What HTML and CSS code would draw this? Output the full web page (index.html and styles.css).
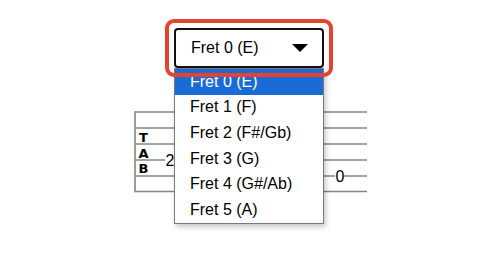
FILE: index.html
```html
<!DOCTYPE html>
<html>
<head>
<meta charset="utf-8">
<link rel="stylesheet" href="styles.css">
</head>
<body>
<div class="stage">
  <div class="picker">
    <div class="select">
      <span class="select-label">Fret 0 (E)</span>
      <svg class="caret" width="16" height="8" viewBox="0 0 16 8"><path d="M0 0H16L8 8Z" fill="#000"/></svg>
    </div>
    <ul class="options">
      <li class="option selected">Fret 0 (E)</li>
      <li class="option">Fret 1 (F)</li>
      <li class="option">Fret 2 (F#/Gb)</li>
      <li class="option">Fret 3 (G)</li>
      <li class="option">Fret 4 (G#/Ab)</li>
      <li class="option">Fret 5 (A)</li>
    </ul>
  </div>
  <svg class="staff" width="240" height="92" viewBox="0 0 240 92">
    <g stroke="#858585" stroke-width="1.6">
      <line x1="5" y1="8" x2="237" y2="8"/>
      <line x1="5" y1="24" x2="237" y2="24"/>
      <line x1="5" y1="40" x2="237" y2="40"/>
      <line x1="5" y1="56" x2="237" y2="56"/>
      <line x1="5" y1="72" x2="237" y2="72"/>
      <line x1="5" y1="87.5" x2="237" y2="87.5"/>
      <line x1="5" y1="7.2" x2="5" y2="88.3"/>
    </g>
    <g class="clef">
      <text x="13.5" y="37.5">T</text>
      <text x="13.5" y="53.5">A</text>
      <text x="13.5" y="69">B</text>
    </g>
    <rect x="35" y="50" width="9" height="12" fill="#fff"/>
    <rect x="205" y="66" width="9" height="12" fill="#fff"/>
    <text class="fret" x="35.5" y="62">2</text>
    <text class="fret" x="205.5" y="77.5">0</text>
  </svg>
</div>
</body>
</html>
```
FILE: styles.css
```css
* { box-sizing: border-box; }
html, body { margin: 0; padding: 0; background: #fff; }
body {
  width: 502px;
  height: 271px;
  overflow: hidden;
  font-family: "Liberation Sans", Arial, sans-serif;
  color: #000;
}
.stage {
  display: flex;
  flex-direction: column;
  padding-top: 19px;
}
.picker {
  position: relative;
  margin-left: 165px;
  width: 168px;
  padding: 9px;
}
.picker::after {
  content: "";
  position: absolute;
  inset: 0;
  border: 4px solid #e6432d;
  border-radius: 9px;
  z-index: 3;
  pointer-events: none;
}
.select {
  display: flex;
  align-items: center;
  justify-content: space-between;
  height: 40px;
  padding: 0 14px 0 15px;
  border: 2px solid #111;
  border-radius: 4px;
  background: #fff;
  font-size: 16px;
}
.select-label { line-height: 18px; }
.caret { display: block; }
.options {
  position: absolute;
  top: 49px;
  left: 9px;
  width: 150px;
  margin: 0;
  padding: 0;
  list-style: none;
  background: #fff;
  border: 1px solid #7a7a7a;
  box-shadow: 2px 3px 5px rgba(0, 0, 0, 0.22);
  z-index: 2;
}
.option {
  display: flex;
  align-items: center;
  height: 25.6px;
  padding-left: 15px;
  font-size: 16px;
}
.option.selected {
  background: #1b6bd6;
  color: #fff;
}
.staff {
  display: block;
  margin-left: 130px;
  margin-top: 27px;
}
.clef text {
  font-family: "DejaVu Sans", "Liberation Sans", sans-serif;
  font-weight: bold;
  font-size: 13px;
  text-anchor: middle;
  fill: #000;
}
.fret {
  font-family: "Liberation Sans", Arial, sans-serif;
  font-size: 16px;
  fill: #000;
}
```
